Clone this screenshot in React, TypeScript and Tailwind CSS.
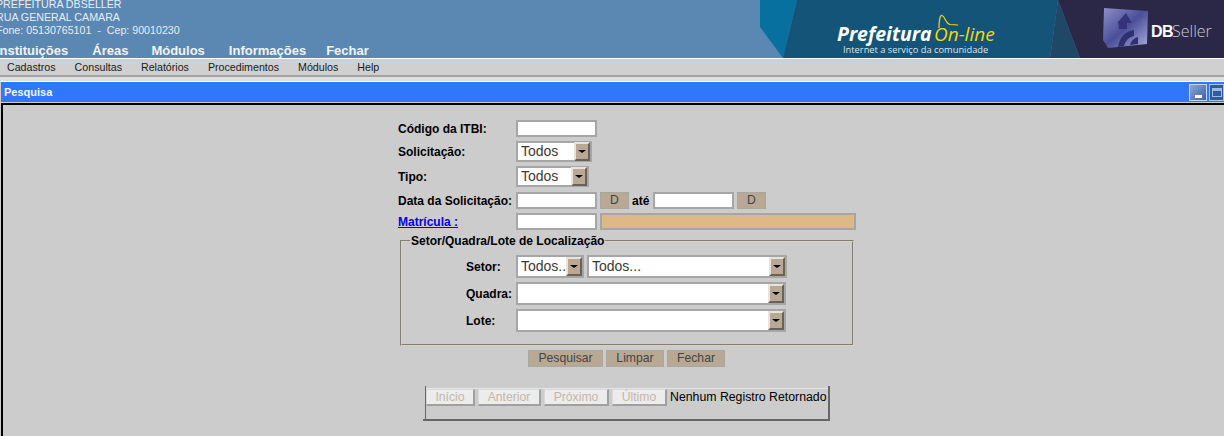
import React from 'react';

const menus = ['Cadastros', 'Consultas', 'Relatórios', 'Procedimentos', 'Módulos', 'Help'];

const Logos: React.FC = () => (
  <svg width="464" height="58" viewBox="760 0 464 58" className="shrink-0">
    <defs>
      <linearGradient id="cube" x1="0" y1="0" x2="1" y2="1">
        <stop offset="0" stopColor="#8f90c8" />
        <stop offset="0.5" stopColor="#4a4f98" />
        <stop offset="1" stopColor="#a9aede" />
      </linearGradient>
    </defs>
    <polygon points="760,0 797,0 783,58 760,27" fill="#08709f" />
    <polygon points="797,0 1058,0 1050,58 783,58" fill="#135478" />
    <polygon points="1058,0 1080,58 1050,58" fill="#1e4866" />
    <polygon points="1058,0 1224,0 1224,58 1080,58" fill="#2a2747" />
    <text x="837" y="41" fill="#ffffff" fontFamily="'Open Sans', sans-serif" fontWeight="700" fontStyle="italic" fontSize="19.5">Prefeitura</text>
    <text x="934" y="41" fill="#f2d80e" fontFamily="'Open Sans', sans-serif" fontWeight="400" fontStyle="italic" fontSize="19">On-line</text>
    <path d="M939 28 C939 20 940 15 942 15.5 C945 16 945 23 950 24.5 L958 25" fill="none" stroke="#f2d80e" strokeWidth="1.2" />
    <text x="843" y="53" fill="#dfe6ec" fontFamily="'Open Sans', sans-serif" fontSize="9.3">Internet a serviço da comunidade</text>
    <path d="M1104 8 L1148 11 L1147 44 L1108 48 L1103 40 Z" fill="url(#cube)" />
    <path d="M1118 22 L1126 13 L1132 23 L1127 23 L1127 29 L1119 29 Z" fill="#34337c" />
    <path d="M1118 47 C1120 36 1126 31 1134 30 L1134 36 C1129 37 1125 41 1124 46 Z" fill="#2f3170" />
    <path d="M1130 45 C1131 41 1134 38 1138 37 L1138 44 Z" fill="#2f3170" />
    <text x="1151" y="37" fill="#ffffff" fontFamily="'Liberation Sans', sans-serif" fontWeight="700" fontSize="16" letterSpacing="-0.5">DB</text>
    <text x="1172" y="37" fill="#c9c9d6" fontFamily="'Open Sans', sans-serif" fontWeight="300" fontSize="16">Seller</text>
  </svg>
);

const Arrow: React.FC = () => (
  <span className="w-[16px] h-[19px] shrink-0 flex items-center justify-center bg-[#b8a894] border-2 border-t-[#e8e4dc] border-l-[#e8e4dc] border-r-[#6a6254] border-b-[#6a6254]">
    <span className="w-0 h-0 border-l-[4px] border-r-[4px] border-t-[3px] border-l-transparent border-r-transparent border-t-black" />
  </span>
);

const Select: React.FC<{ value?: string; width: string; height: string }> = ({ value, width, height }) => (
  <div className={`${width} ${height} shrink-0 flex items-center justify-between bg-white border-2 border-[#a6a6a6] pl-[3px] text-[14px] text-[#3a3a3a]`}>
    <span>{value}</span>
    <Arrow />
  </div>
);

const Input: React.FC<{ width?: string; tan?: boolean }> = ({ width = 'w-[81px]', tan }) => (
  <input
    readOnly
    className={`${width} h-[17px] shrink-0 border-2 border-[#a6a6a6] ${tan ? 'bg-[#deb887]' : 'bg-white'}`}
  />
);

const TanButton: React.FC<{ label: string; width: string }> = ({ label, width }) => (
  <button className={`${width} h-[17px] shrink-0 flex items-center justify-center bg-[#b8a894] border border-[#a8a8a0] text-[12.2px] text-[#444444]`}>
    {label}
  </button>
);

const PagerButton: React.FC<{ label: string; width: string }> = ({ label, width }) => (
  <button className={`${width} h-[17px] shrink-0 flex items-center justify-center bg-[#ececec] border-r-2 border-b-2 border-t border-l border-[#a0a0a0] border-t-[#d8d8d8] border-l-[#d8d8d8] text-[12.2px] text-[#c4b7a6]`}>
    {label}
  </button>
);

const Row: React.FC<{ label: React.ReactNode; height: string; children: React.ReactNode }> = ({ label, height, children }) => (
  <div className={`flex items-center ${height}`}>
    <div className="w-[118px] shrink-0 font-bold text-[12px] text-black whitespace-nowrap">{label}</div>
    {children}
  </div>
);

const FieldRow: React.FC<{ label: string; children: React.ReactNode }> = ({ label, children }) => (
  <div className="flex items-center h-[23px] mb-[4px]">
    <div className="w-[50px] shrink-0 font-bold text-[12px] text-black">{label}</div>
    {children}
  </div>
);

export default function App() {
  return (
    <div className="w-[1224px] h-[436px] overflow-hidden bg-[#cccccc] font-['Liberation_Sans',Arial,sans-serif] flex flex-col">
      <header className="h-[58px] shrink-0 flex justify-between bg-[#5b87b3] overflow-hidden">
        <div className="text-white min-w-0 -ml-[4px] -mt-[2px]">
          <div className="text-[10.67px] leading-[13px] text-[#e8eef5] whitespace-nowrap">
            <div>PREFEITURA DBSELLER</div>
            <div>RUA GENERAL CAMARA</div>
            <div className="whitespace-pre">Fone: 05130765101  -  Cep: 90010230</div>
          </div>
          <nav className="flex gap-[24px] mt-[6px] font-bold text-[13px] leading-[15px] text-[#f2f5f8]">
            <span>Instituições</span>
            <span>Áreas</span>
            <span className="-ml-[1px]">Módulos</span>
            <span>Informações</span>
            <span className="-ml-[4px]">Fechar</span>
          </nav>
        </div>
        <Logos />
      </header>

      <div className="h-[1px] shrink-0 bg-white" />
      <div className="h-[18px] shrink-0 flex items-center gap-[19px] pl-[7px] bg-[#d0d0d0] border-b-2 border-[#a4a4a4] text-[10.67px] text-[#1a1a1a]">
        {menus.map(m => (
          <span key={m}>{m}</span>
        ))}
      </div>
      <div className="h-[5px] shrink-0 bg-[#dedede] border-b border-white" />

      <div className="h-[20px] shrink-0 ml-[1px] flex items-center justify-between bg-[#2f78fb]">
        <span className="pl-[3px] font-bold text-[11px] text-[#f2f5fb]">Pesquisa</span>
        <div className="flex gap-[2px]">
          <div className="w-[18px] h-[17px] flex items-end justify-center pb-[2px] bg-[linear-gradient(135deg,#8aa6d6,#3a63a8)] border border-[#c8d6f0]">
            <span className="w-[7px] h-[3px] bg-white" />
          </div>
          <div className="w-[15px] h-[17px] flex items-center justify-center bg-[#2f5c9e] border border-[#a9c0e8]">
            <span className="w-[10px] h-[9px] border border-[#9fb8e4] border-t-[3px]" />
          </div>
        </div>
      </div>

      <main className="flex-1 mt-[1px] ml-[1px] border-l-2 border-t-2 border-black pl-[395px] pt-[15px]">
        <div className="w-[460px]">
          <Row label="Código da ITBI:" height="h-[17px]">
            <Input />
          </Row>
          <Row label="Solicitação:" height="h-[21px] mt-[4px]">
            <Select value="Todos" width="w-[76px]" height="h-[21px]" />
          </Row>
          <Row label="Tipo:" height="h-[21px] mt-[4px]">
            <Select value="Todos" width="w-[73px]" height="h-[21px]" />
          </Row>
          <Row label="Data da Solicitação:" height="h-[17px] mt-[5px]">
            <Input />
            <div className="ml-[3px]"><TanButton label="D" width="w-[29px]" /></div>
            <span className="w-[18px] shrink-0 ml-[3px] mr-[3px] font-bold text-[12px] text-black">até</span>
            <Input />
            <div className="ml-[3px]"><TanButton label="D" width="w-[29px]" /></div>
          </Row>
          <Row
            label={<a className="text-[#0000ee] underline">Matrícula :</a>}
            height="h-[17px] mt-[4px]"
          >
            <Input />
            <div className="ml-[3px] flex"><Input width="w-[256px]" tan /></div>
          </Row>

          <fieldset className="w-[454px] h-[111px] ml-[2px] mt-[5px] border-2 [border-style:groove] border-[#d8d0c0] pl-[64px] pt-[8px]">
            <legend className="ml-[-56px] px-[1px] font-bold text-[12px] leading-[12px] text-black">
              Setor/Quadra/Lote de Localização
            </legend>
            <FieldRow label="Setor:">
              <Select value="Todos.." width="w-[68px]" height="h-[23px]" />
              <div className="ml-[3px]"><Select value="Todos..." width="w-[200px]" height="h-[23px]" /></div>
            </FieldRow>
            <FieldRow label="Quadra:">
              <Select width="w-[270px]" height="h-[23px]" />
            </FieldRow>
            <FieldRow label="Lote:">
              <Select width="w-[270px]" height="h-[23px]" />
            </FieldRow>
          </fieldset>

          <div className="flex gap-[3px] ml-[130px] mt-[4px]">
            <TanButton label="Pesquisar" width="w-[75px]" />
            <TanButton label="Limpar" width="w-[58px]" />
            <TanButton label="Fechar" width="w-[58px]" />
          </div>

          <div className="w-[407px] ml-[25px] mt-[19px] border-b-2 border-[#666666]">
            <div className="ml-[2px] h-[33px] pt-[2px] border-l border-r-2 border-[#666666]">
              <div className="flex gap-[3px] border-t border-[#e4e4e4]">
                <PagerButton label="Início" width="w-[49px]" />
                <PagerButton label="Anterior" width="w-[63px]" />
                <PagerButton label="Próximo" width="w-[65px]" />
                <PagerButton label="Último" width="w-[55px]" />
                <span className="text-[12.3px] leading-[17px] text-black whitespace-nowrap">Nenhum Registro Retornado</span>
              </div>
            </div>
          </div>
        </div>
      </main>
    </div>
  );
}
